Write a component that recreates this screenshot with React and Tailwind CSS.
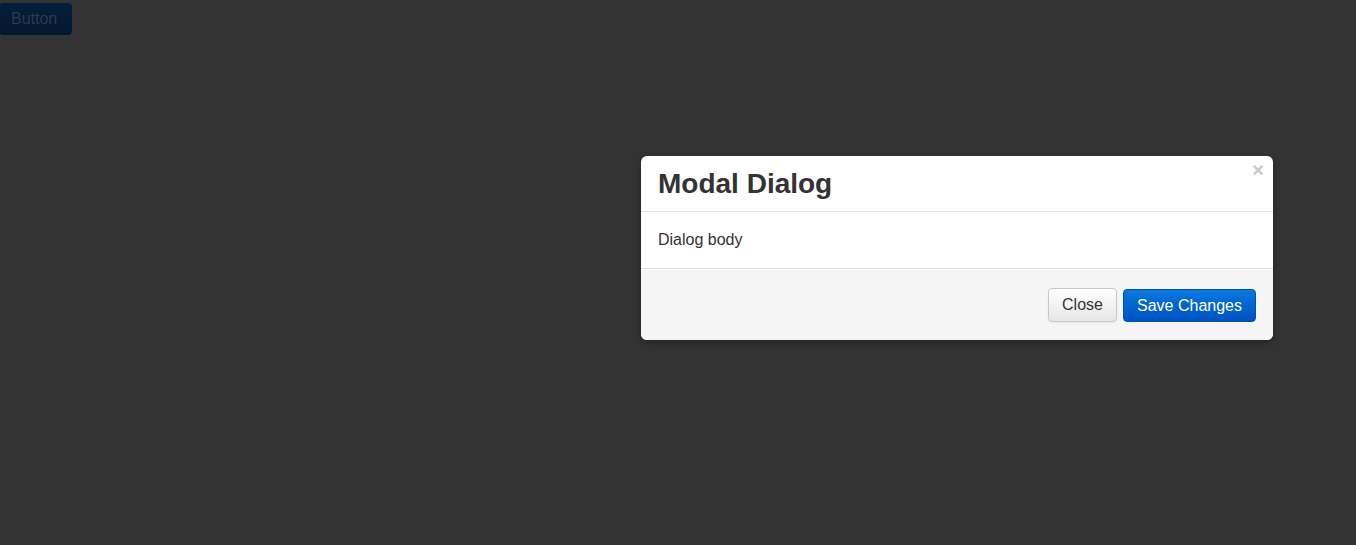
export default function App() {
  return (
    <div className="relative min-h-[545px] w-full bg-[#333333] font-['Liberation_Sans',Arial,sans-serif]">
      <div className="pt-[3px]">
        <button className="h-[32px] w-[72px] pl-[11px] text-left rounded-r-[4px] rounded-l-[2px] bg-gradient-to-b from-[#031f3e] to-[#02182f] text-[16px] leading-[32px] text-[#2c3a4b]">
          Button
        </button>
      </div>

      <div className="absolute left-[641px] top-[156px] w-[632px] overflow-hidden rounded-[6px] bg-white shadow-[0_3px_7px_rgba(0,0,0,0.3)]">
        <div className="relative flex h-[56px] items-center border-b border-[#e5e5e5] px-[17px]">
          <h3 className="text-[28px] font-bold leading-[30px] text-[#333333]">Modal Dialog</h3>
          <span className="absolute right-[9px] top-[4px] text-[20px] font-bold leading-[20px] text-[#c9c9c9]">×</span>
        </div>
        <div className="px-[17px] py-[15px] text-[16px] leading-[26px] text-[#333333]">Dialog body</div>
        <div className="flex h-[72px] items-center justify-end gap-[6px] border-t border-[#dddddd] bg-[#f5f5f5] pr-[17px] shadow-[inset_0_1px_0_#ffffff]">
          <button className="h-[34px] w-[69px] rounded-[4px] border border-[#c8c8c8] bg-gradient-to-b from-white to-[#e6e6e6] text-[16px] text-[#333333] shadow-[inset_0_1px_0_rgba(255,255,255,0.2),0_1px_2px_rgba(0,0,0,0.05)]">
            Close
          </button>
          <button className="mt-[2px] h-[33px] w-[133px] rounded-[4px] border border-[#0050b8] bg-gradient-to-b from-[#0a78dc] to-[#0052c2] text-[16px] text-white">
            Save Changes
          </button>
        </div>
      </div>
    </div>
  );
}
